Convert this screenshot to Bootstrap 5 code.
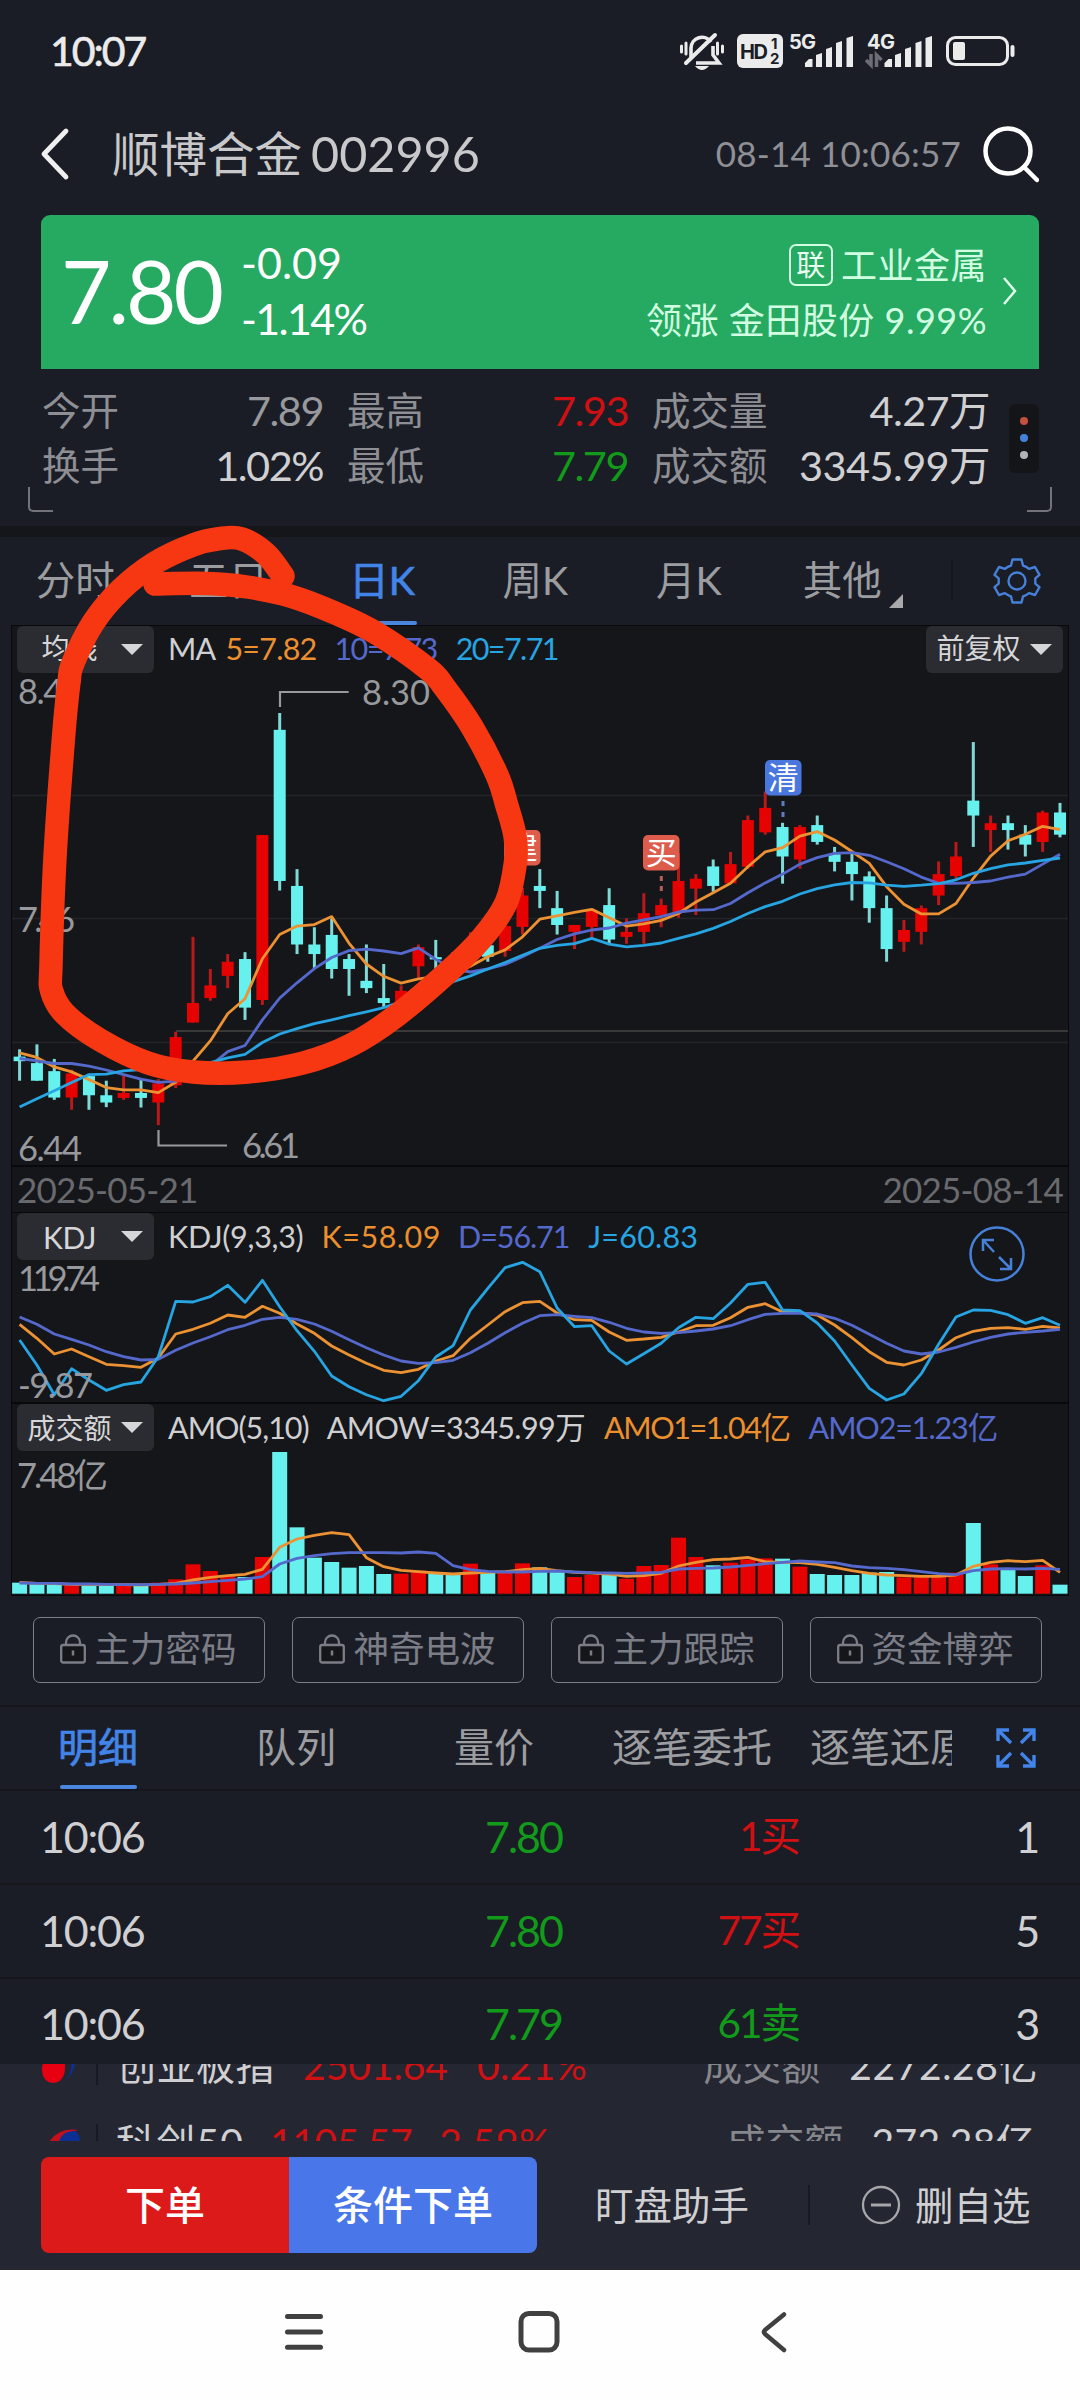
<!DOCTYPE html>
<html lang="zh-CN">
<head>
<meta charset="utf-8">
<meta name="viewport" content="width=1080">
<title>顺博合金 002996</title>
<link rel="stylesheet" href="https://cdn.jsdelivr.net/npm/bootstrap@5.3.0/dist/css/bootstrap.min.css">
<style>
html,body{width:1080px;height:2400px;overflow:hidden}
body{margin:0;background:#1b1d26;color:#d0d0d2;font-family:Lato,"Noto Sans CJK SC",sans-serif;font-size:38px;line-height:1;font-weight:400}
svg{display:block;flex:none}
span{white-space:nowrap}
.screen{width:1080px;height:2400px}
.statusbar{height:100px;padding:1px 54px 0 50px;color:#ebebeb}
.clock{font-size:41px;letter-spacing:-2px;-webkit-text-stroke:.6px #ebebeb}
.titlebar{height:115px;padding:0 41px 8px 40px}
.stockname{font-size:47.5px;color:#c9c9cb;margin-left:42px}
.stockcode{font-size:48.5px;color:#c9c9cb;margin-left:9px}
.stamp{font-size:35px;color:#8f9095;letter-spacing:.2px}
.quote{height:154px;margin:0 41px;background:#26a961;border-radius:9px 9px 0 0;padding:0 21px 3px 20px;color:#fff}
.bigprice{font-size:87px;letter-spacing:-3px;width:180px;height:87px}
.delta{font-size:43px;gap:13px}
.industry{font-size:36px;letter-spacing:.5px;color:#d2ffe2;gap:16px;margin-right:15px}
.tagbox{width:44px;height:42px;border:2px solid #d2ffe2;border-radius:7px;font-size:29px;color:#e9fff0}
.stats{height:157px;padding:14px 41px 0 42px}
.kv{height:55px;color:#d0d0d2;font-size:41.5px;letter-spacing:-.6px}
.kv.narrow{letter-spacing:-1.5px}
.kv>span:first-child{font-size:38.5px;color:#8e8f94;letter-spacing:0}
.dots{width:30px;height:69px;border-radius:6px;background:#141519;gap:8.6px;margin-left:18px;margin-top:20.5px}
.dots i{width:8px;height:8px;border-radius:50%}
.corner{width:25px;height:25px;border:2.5px solid #73747a;border-top:0}
.band{height:11px;background:#15161a}
.periods{height:88px;font-size:39.5px;color:#9c9da0}
.periods .per{width:153.4px;height:88px;padding-bottom:2px;padding-right:3px}
.on{color:#4284e8;-webkit-text-stroke:.7px #4284e8}
.uline{height:4.5px;border-radius:2px;background:#4a85e0}
.plot{margin:0 11px;background:#15161a;border:1px solid #08090c;width:1058px}
.tool{height:47px;padding-left:5px;font-size:30.5px}
.tool.first{height:48px}
.tool.first span{margin-bottom:3px}
.pick{width:137px;height:47px;background:#2b2c31;border-radius:6px;color:#d6d6d8;font-size:28px;padding-right:11px}
.pick .nm{width:89px;text-align:center}
.tri{width:0;height:0;border:11px solid transparent;border-top:11px solid #d6d6d8;border-bottom:0}
.cO{color:#ec8f2e}.cP{color:#5569cc}.cB{color:#26a5e2}
.up{color:#d01012!important}.dn{color:#129a1b!important}
.datesrow{height:48px;border-top:2px solid #08090c;border-bottom:1px solid #08090c;font-size:35px;letter-spacing:-.8px;color:#696a6d;padding:0 5px}
.locks{height:109px;padding:21px 38px 0 33px}
.lockbtn{width:232px;height:66px;border:1.5px solid #7b7d87;border-radius:7px;color:#7b7d87;font-size:35.5px;padding:0 1px 2px 0;gap:8px;background:none}
.dtabs{height:84px;border-top:2px solid #15161c;font-size:40px;color:#9c9da0}
.dtab{width:198px;height:82px;flex:none;padding:0 2px 2px 0}
.tick{height:94px;border-top:2px solid #15161c;font-size:43px;padding:0 41px 2px 40px}
.tick span{letter-spacing:-1.2px}
.tick .up,.tick .dn{letter-spacing:-2px}
.tick .side{font-size:40.5px}
.indices{height:77px;background:#242632;overflow:hidden;font-size:39px}
.idx{height:77px;padding:0 42px 0 41px}
.actions{height:129px;background:#242632;padding:16px 41px 0}
.actbtn{width:248px;height:96px;border:0;color:#fff;font-size:40px;font-weight:500;padding:0}
.navkeys{height:130px;background:#fefefe}
.ink{left:0;top:0;pointer-events:none}
</style>
</head>
<body>
<div class="screen position-relative d-flex flex-column">

<header class="statusbar d-flex align-items-center justify-content-between">
  <span class="clock">10:07</span>
  <svg width="350" height="50" viewBox="676 26 350 50" fill="none" stroke="#ebebeb">
    <path d="M691 57V48a11 11 0 0 1 20-6M713 46v9l6 8H696" stroke-width="3.6"/>
    <path d="M686 63 715 35" stroke-width="4" stroke-linecap="round"/>
    <path d="M695 66h14q-7 8-14 0z" fill="#ebebeb" stroke="none"/>
    <path d="M681.500 46v6M686 43v11M717.500 43v11M722.500 46v6" stroke-width="3" stroke-linecap="round"/>
    <rect x="737" y="34" width="46" height="34" rx="6" fill="#ebebeb" stroke="none"/>
    <g fill="#1b1d26" stroke="none" font-family="Inter,sans-serif" font-weight="700"><text x="740" y="58.500" font-size="20" textLength="28">HD</text><text x="771" y="49" font-size="15">1</text><text x="770" y="64" font-size="15">2</text></g>
    <g fill="#ebebeb" stroke="none" font-family="Inter,sans-serif" font-weight="700" font-size="20"><text x="789" y="48.500" textLength="27">5G</text><text x="867" y="48.500" textLength="28">4G</text></g>
    <g fill="#ebebeb" stroke="none">
      <path d="M805 67v-4l4-4h3.500v8zM816 67V55l6-2v14zM826 67V49l6-2v20zM836 67V43l6-2v26zM846.500 67V38l6.500-2v31z"/>
      <path d="M884.500 67v-4l4-4h3.500v8zM895 67V55l6-2v14zM905 67V49l6-2v20zM915.500 67V43l6-2v26zM925.500 67V38l6.500-2v31z"/>
    </g>
    <path d="M871 54v11l-5-5M876.500 67V55l5 5" stroke="#6c6d74" stroke-width="3.500"/>
    <rect x="947.500" y="37.500" width="60" height="27" rx="8" stroke-width="3"/>
    <rect x="953" y="42" width="12" height="18" rx="2" fill="#ebebeb" stroke="none"/>
    <path d="M1012.500 47v8" stroke-width="4" stroke-linecap="round"/>
  </svg>
</header>

<div class="titlebar d-flex align-items-center">
  <svg width="30" height="54" viewBox="0 0 30 54"><path d="M26 4 4 27 26 50" fill="none" stroke="#efefef" stroke-width="4.800" stroke-linecap="round" stroke-linejoin="round"/></svg>
  <span class="stockname">顺博合金</span><span class="stockcode">002996</span>
  <span class="stamp ms-auto" style="margin-right:22px">08-14 10:06:57</span>
  <svg width="56" height="58" viewBox="0 0 56 58" fill="none" stroke="#fff" stroke-width="4.500" stroke-linecap="round"><circle cx="25" cy="26" r="22.500"/><path d="M41 42 54 55"/></svg>
</div>

<section class="quote d-flex align-items-center">
  <span class="bigprice">7.80</span>
  <div class="delta d-flex flex-column"><span>-0.09</span><span style="letter-spacing:-1.7px">-1.14%</span></div>
  <div class="industry d-flex flex-column align-items-end ms-auto">
    <div class="d-flex align-items-center gap-2"><span class="tagbox d-flex align-items-center justify-content-center">联</span><span>工业金属</span></div>
    <span>领涨 金田股份 9.99%</span>
  </div>
  <svg width="16" height="30" viewBox="0 0 16 30"><path d="M2 2 13 15 2 28" fill="none" stroke="#e0ffea" stroke-width="2.500"/></svg>
</section>

<section class="stats position-relative d-flex align-items-start">
  <div class="flex-fill d-flex" style="gap:24px">
    <div style="width:281px">
      <div class="kv narrow d-flex align-items-center justify-content-between"><span>今开</span><span style="color:#98999c">7.89</span></div>
      <div class="kv narrow d-flex align-items-center justify-content-between"><span>换手</span><span>1.02%</span></div>
    </div>
    <div style="width:281px">
      <div class="kv narrow d-flex align-items-center justify-content-between"><span>最高</span><span class="up">7.93</span></div>
      <div class="kv narrow d-flex align-items-center justify-content-between"><span>最低</span><span class="dn">7.79</span></div>
    </div>
    <div style="width:338px">
      <div class="kv d-flex align-items-center justify-content-between"><span>成交量</span><span>4.27万</span></div>
      <div class="kv d-flex align-items-center justify-content-between"><span>成交额</span><span>3345.99万</span></div>
    </div>
  </div>
  <div class="dots d-flex flex-column align-items-center justify-content-center"><i style="background:#c4503f"></i><i style="background:#4482dc"></i><i style="background:#b4b4b8"></i></div>
  <div class="corner position-absolute border-end-0" style="left:28px;top:118px;border-bottom-left-radius:5px"></div>
  <div class="corner position-absolute border-start-0" style="right:28px;top:118px;border-bottom-right-radius:5px"></div>
</section>

<div class="band"></div>

<nav class="periods d-flex align-items-center">
  <span class="per d-flex align-items-center justify-content-center">分时</span>
  <span class="per d-flex align-items-center justify-content-center">五日</span>
  <span class="per on position-relative d-flex align-items-center justify-content-center">日K<i class="uline position-absolute bottom-0" style="width:70px"></i></span>
  <span class="per d-flex align-items-center justify-content-center">周K</span>
  <span class="per d-flex align-items-center justify-content-center">月K</span>
  <span class="per position-relative d-flex align-items-center justify-content-center">其他<svg class="position-absolute" style="right:17px;bottom:17px" width="14" height="14"><path d="M14 0V14H0z" fill="#a9a9ab"/></svg></span>
  <svg class="ms-auto" width="100" height="60" viewBox="950 551 100 60" fill="none" stroke="#4680d8" stroke-width="2.400" stroke-linejoin="round">
    <path d="M952 560v41" stroke="#13141a" stroke-width="1.500"/>
    <circle cx="1017" cy="581" r="8.500"/>
    <path d="M1012.500 559.500h9l1.500 6q3.500 1.200 6 3.300l6-1.800 4.500 7.800-4.200 3.600v5.200l4.200 3.600-4.500 7.800-6-1.800q-2.500 2.100-6 3.300l-1.500 6h-9l-1.500-6q-3.500-1.200-6-3.300l-6 1.800-4.500-7.800 4.200-3.600v-5.200l-4.200-3.600 4.500-7.800 6 1.800q2.500-2.100 6-3.300z"/>
  </svg>
  <span style="width:30px"></span>
</nav>

<section class="plot">
  <div class="tool first d-flex align-items-center">
    <div class="pick d-flex align-items-center justify-content-between ps-2 align-self-start"><span class="nm">均线</span><i class="tri"></i></div>
    <span style="margin-left:14px;letter-spacing:-.8px">MA</span><span class="cO" style="margin-left:10px;letter-spacing:-.75px">5=7.82</span><span class="cP" style="margin-left:18px;letter-spacing:-1.6px">10=7.73</span><span class="cB" style="margin-left:19px;letter-spacing:-1.6px">20=7.71</span>
    <div class="pick d-flex align-items-center justify-content-between ps-2 ms-auto align-self-start" style="margin-right:5px"><span class="nm">前复权</span><i class="tri"></i></div>
  </div>
  <svg id="kline" width="1056" height="491" viewBox="12 674 1056 491"></svg>
  <div class="datesrow d-flex align-items-center justify-content-between"><span>2025-05-21</span><span>2025-08-14</span></div>
  <div class="position-relative">
    <div class="tool d-flex align-items-center">
      <div class="pick d-flex align-items-center justify-content-between ps-2"><span class="nm" style="font-size:30px;letter-spacing:-.5px">KDJ</span><i class="tri"></i></div>
      <span style="margin-left:14px;letter-spacing:-.3px">KDJ(9,3,3)</span><span class="cO" style="margin-left:18px;letter-spacing:.55px">K=58.09</span><span class="cP" style="margin-left:17px;letter-spacing:-1.1px">D=56.71</span><span class="cB" style="margin-left:19px;letter-spacing:.2px">J=60.83</span>
    </div>
    <svg id="kdj" width="1056" height="144" viewBox="12 1260 1056 144"></svg>
    <svg class="position-absolute" style="left:956px;top:12px" width="58" height="58" viewBox="0 0 58 58" fill="none" stroke="#4680d8" stroke-width="2.500"><circle cx="29" cy="29" r="26.500"/><path d="M26 27 15 15M15 26V15h11M31 32l12 12M43 33v11H32"/></svg>
  </div>
  <div class="tool d-flex align-items-center" style="box-shadow:0 -2px #08090c">
    <div class="pick d-flex align-items-center justify-content-between ps-2"><span class="nm">成交额</span><i class="tri"></i></div>
    <span style="margin-left:14px;letter-spacing:-1px">AMO(5,10)</span><span style="margin-left:18px;letter-spacing:-.6px">AMOW=3345.99万</span><span class="cO" style="margin-left:19px;letter-spacing:-1.4px">AMO1=1.04亿</span><span class="cP" style="margin-left:19px;letter-spacing:-1.1px">AMO2=1.23亿</span>
  </div>
  <svg id="amo" width="1056" height="144" viewBox="12 1451 1056 144"></svg>
</section>

<section class="locks d-flex justify-content-between align-items-start">
  <button class="lockbtn btn d-flex align-items-center justify-content-center"><svg class="lk" width="26" height="30"></svg><span>主力密码</span></button>
  <button class="lockbtn btn d-flex align-items-center justify-content-center"><svg class="lk" width="26" height="30"></svg><span>神奇电波</span></button>
  <button class="lockbtn btn d-flex align-items-center justify-content-center"><svg class="lk" width="26" height="30"></svg><span>主力跟踪</span></button>
  <button class="lockbtn btn d-flex align-items-center justify-content-center"><svg class="lk" width="26" height="30"></svg><span>资金博弈</span></button>
</section>

<nav class="dtabs d-flex align-items-center">
  <div class="d-flex overflow-hidden" style="width:952px">
    <span class="dtab on position-relative d-flex align-items-center justify-content-center">明细<i class="uline position-absolute bottom-0" style="width:77px"></i></span>
    <span class="dtab d-flex align-items-center justify-content-center">队列</span>
    <span class="dtab d-flex align-items-center justify-content-center">量价</span>
    <span class="dtab d-flex align-items-center justify-content-center">逐笔委托</span>
    <span class="dtab d-flex align-items-center justify-content-center">逐笔还原</span>
  </div>
  <svg style="margin-left:44px" width="40" height="40" viewBox="0 0 40 40" fill="none" stroke="#4284e8" stroke-width="3.400"><path d="M2 13V2h11M2 2l13 13M27 2h11v11M38 2 25 15M2 27v11h11M2 38l13-13M38 27v11H27M38 38 25 25"/></svg>
</nav>

<div class="tick d-flex align-items-center"><span style="width:200px">10:06</span><span class="dn text-end" style="width:322px">7.80</span><span class="side up text-end" style="width:237px">1买</span><span class="ms-auto">1</span></div>
<div class="tick d-flex align-items-center"><span style="width:200px">10:06</span><span class="dn text-end" style="width:322px">7.80</span><span class="side up text-end" style="width:237px">77买</span><span class="ms-auto">5</span></div>
<div class="tick d-flex align-items-center" style="height:87px;padding-bottom:0"><span style="width:200px;margin-top:4px">10:06</span><span class="dn text-end" style="width:322px;margin-top:4px">7.79</span><span class="side dn text-end" style="width:237px;margin-top:4px">61卖</span><span class="ms-auto" style="margin-top:4px">3</span></div>

<section class="indices">
  <div class="idx d-flex align-items-center" style="margin-top:-37px">
    <svg width="39" height="39" viewBox="0 0 39 39"><path d="M24 4q20 12-1 33Q37 20 24 4z" fill="#0b2f92"/><path d="M1 25Q0 14 10 11q6 2 14 7 1 18-12 19Q2 36 1 25z" fill="#e60012"/></svg>
    <i style="width:2px;height:38px;background:#181a22;margin-left:16px"></i>
    <span style="margin-left:19px;letter-spacing:.5px">创业板指</span><span class="up" style="margin-left:28px">2501.64</span><span class="up" style="margin-left:29px;letter-spacing:.4px">0.21%</span>
    <span class="ms-auto" style="color:#86878c">成交额</span><span style="margin-left:29px;letter-spacing:.6px">2272.28亿</span>
  </div>
  <div class="idx d-flex align-items-center">
    <svg width="39" height="39" viewBox="0 0 39 39"><path d="M1 38Q8 2 38 7 18 8 13 38z" fill="#c4101c"/><path d="M17 22Q20 7 34 8q9 6 2 22H14z" fill="#0b2f92"/></svg>
    <i style="width:2px;height:38px;background:#181a22;margin-left:16px"></i>
    <span style="margin-left:18px;letter-spacing:1.2px">科创50</span><span class="up" style="margin-left:26px;letter-spacing:-.4px">1105.57</span><span class="up" style="margin-left:27px;letter-spacing:.7px">2.59%</span>
    <span class="ms-auto" style="color:#86878c">成交额</span><span style="margin-left:28px;letter-spacing:.3px;margin-right:3px">272.28亿</span>
  </div>
</section>

<section class="actions d-flex align-items-start">
  <button class="actbtn btn" style="background:#dc1a1a;border-radius:8px 0 0 8px">下单</button>
  <button class="actbtn btn" style="background:#4977e9;border-radius:0 8px 8px 0">条件下单</button>
  <div class="d-flex align-items-center flex-fill" style="height:96px;font-size:38.500px">
    <span style="margin-left:58px">盯盘助手</span>
    <i style="width:2px;height:40px;background:#181a22;margin-left:59px"></i>
    <svg style="margin-left:51px" width="40" height="40" viewBox="0 0 40 40" fill="none" stroke="#a6a7aa" stroke-width="2.300"><circle cx="20" cy="20" r="18"/><path d="M10 20h20" stroke-width="3"/></svg>
    <span style="margin-left:14px">删自选</span>
  </div>
</section>

<footer class="navkeys">
  <svg width="1080" height="130" viewBox="0 2270 1080 130" fill="none" stroke="#404040" stroke-width="5" stroke-linecap="round" stroke-linejoin="round">
    <path d="M287.500 2316.500h33M287.500 2332h33M287.500 2347.300h33"/>
    <rect x="521" y="2313.500" width="36" height="36.500" rx="8"/>
    <path d="M784 2314.500 765 2330q-2 2 0 4l19 16" stroke-width="4.500"/>
  </svg>
</footer>

<svg class="ink position-absolute" width="1080" height="1200" viewBox="0 0 1080 1200"><path id="pen" fill="none" stroke="#f73711" stroke-width="23.500" stroke-linecap="round" stroke-linejoin="round"/></svg>
</div>

<script src="https://cdn.jsdelivr.net/npm/bootstrap@5.3.0/dist/js/bootstrap.bundle.min.js"></script>
<script>
const CYAN='#66f0ee', RED='#e60200';
const X=i=>19.6+17.34*i;
const line=(vals,Y,c)=>`<polyline fill="none" stroke="${c}" stroke-width="2.800" stroke-linejoin="round" points="${vals.map((v,i)=>X(i).toFixed(1)+','+Y(v).toFixed(1)).join(' ')}"/>`;
const label=(x,y,t,w,c='#98999c')=>`<text x="${x}" y="${y}" font-size="34.5" fill="${c}" textLength="${w}">${t}</text>`;
const ORANGE='#ec9232', PURPLE='#5569cc', BLUE='#26a5e2';

/* candles: colour, body top, body bottom, high, low */
const YK=v=>620+v/2.6133;
const candles=`c1141,1153,1122,1204 c1158,1204,1109,1204 c1179,1248,1147,1254 r1185,1248,1175,1280 c1192,1242,1188,1280 c1242,1261,1204,1273 r1236,1249,1192,1254 c1236,1249,1198,1274 r1211,1261,1200,1320 r1090,1216,1076,1223
r1001,1052,828,1052 r955,988,912,995 r893,930,873,962 c886,1013,868,1045 r562,993,562,1006 c287,682,243,707 c695,848,651,873 c848,873,803,910 c823,912,780,937 c886,912,873,982
c943,962,848,975 c988,1001,899,1013 r969,1025,955,1040 r855,905,848,935 c881,887,836,912 c895,910,868,930 r841,890,816,905 c850,880,830,893 r800,865,790,880 r720,802,700,822
c695,708,651,753 c753,797,708,822 r797,815,797,860 r760,802,757,830 c745,835,701,845 r815,828,780,846 r766,815,714,846 r745,772,728,803 r682,765,610,778 r676,702,664,771
c644,695,626,710 r638,688,606,688 r523,645,511,650 r491,555,448,561 c541,618,530,689 r541,626,536,650 c536,580,511,587 c612,632,593,657 c632,664,610,733 c670,753,657,791
c753,860,720,893 r810,841,784,867 r753,815,746,848 r664,720,631,745 r618,669,580,680 c472,511,319,593 r531,549,511,606 c531,549,511,600 c561,587,536,618 r503,580,498,606 c503,561,478,568`.split(/\s+/);
const ma5=[1131,1143,1168,1181,1201,1222,1228,1228,1235,1208,1153,1100,1029,990,885,822,800,796,775,845,899,931,949,938,932,925,905,880,862,828,782,773,764,756,778,800,794,785,767,737,713,688,645,606,595,565,553,575,605,636,697,743,768,768,741,675,617,577,560,539,548];
const ma10=[1146,1152,1159,1159,1166,1176,1188,1200,1208,1205,1185,1165,1128,1112,1045,988,948,911,882,864,860,865,872,857,887,912,920,912,900,880,858,835,820,810,805,792,784,775,763,758,757,741,713,687,664,638,621,610,608,615,632,650,672,688,688,686,682,672,664,638,612];
const ma20=[1273,1251,1230,1209,1188,1187,1178,1175,1175,1172,1170,1157,1144,1135,1104,1082,1068,1055,1045,1034,1024,1013,998,980,960,945,930,912,895,876,858,850,846,832,847,854,850,844,832,820,806,788,767,749,735,716,702,692,686,687,693,696,693,689,679,662,650,640,635,628,622];
let k='';
for(const y of [795.5,918.5,1042.5]) k+=`<path d="M12 ${y}H1068" stroke="#22242a" stroke-width="1.3"/>`;
k+='<path d="M176 1031H1068" stroke="#39393a" stroke-width="2.2"/>';
candles.forEach((s,i)=>{
  const up=s[0]==='r',[a,b,h,l]=s.slice(1).split(',').map(v=>YK(+v));
  k+=`<rect x="${X(i)-1.5}" y="${h}" width="3" height="${l-h}" fill="${up?'#b81a1c':'#7fd9d6'}"/><rect x="${X(i)-6}" y="${a}" width="12" height="${b-a}" fill="${up?RED:CYAN}"/>`;
});
k+=line(ma5,YK,ORANGE)+line(ma10,YK,PURPLE)+line(ma20,YK,BLUE);
k+=label(18,704,'8.47',64)+label(18,932,'7.46',57)+label(18,1161,'6.44',64)+label(362,705,'8.30',68)+label(242,1158,'6.61',58);
k+='<path d="M280 707V692H348.600M158.500 1130V1145.500H227" fill="none" stroke="#98999c" stroke-width="2.2"/>';
for(const [x,y,t,c] of [[504,830,'建','#dd5c4c'],[643,835,'买','#dd5c4c'],[765,760,'清','#4977dd']])
  k+=`<rect x="${x}" y="${y}" width="36.500" height="35.500" rx="5" fill="${c}"/><text x="${x+18.2}" y="${y+29}" font-size="31" fill="#fff" text-anchor="middle">${t}</text>`;
k+='<path d="M661.300 876v18" stroke="#b4605a" stroke-width="3" stroke-dasharray="5 5"/><path d="M783 801v18" stroke="#5f7bc4" stroke-width="3" stroke-dasharray="5 6"/>';
document.getElementById('kline').innerHTML=k;

const YD=v=>1160+v/3;
const J=[540,615,704,626,660,691,674,666,590,424,426,410,376,427,361,440,512,574,648,680,704,722,709,662,591,557,450,385,323,307,335,444,500,497,573,612,581,550,503,472,476,429,373,367,450,452,489,543,615,685,720,702,641,553,471,450,451,464,490,473,496];
const K=[493,535,582,567,590,613,617,622,594,522,508,490,465,472,439,460,492,520,558,585,610,631,638,628,603,587,535,495,455,428,424,459,479,481,516,541,537,532,516,497,496,473,442,431,456,458,465,495,533,575,607,615,600,570,533,514,505,503,508,499,504];
const D=[471,493,522,538,555,575,590,600,598,571,549,530,509,496,478,472,478,492,514,539,563,585,603,610,608,601,578,550,518,490,467,464,469,473,487,505,516,520,518,513,507,497,479,463,460,460,462,475,496,523,550,573,582,576,562,546,532,522,517,513,508];
document.getElementById('kdj').innerHTML=line(K,YD,ORANGE)+line(D,YD,PURPLE)+line(J,YD,BLUE)+label(18,1291,'119.74',82)+label(18,1398,'-9.87',75);

const vol='c1268 c1268 c1270 r1270 c1272 c1274 r1275 c1276 r1268 r1258 r1213 r1233 r1247 c1251 r1191 c876 c1102 c1193 c1206 c1223 c1218 c1242 r1241 r1232 c1238 c1243 r1211 c1234 r1236 r1210 c1222 c1236 r1251 r1245 c1240 r1256 r1218 r1215 r1133 r1191 c1216 r1208 r1198 r1195 c1196 r1220 c1242 c1245 c1245 c1238 c1236 r1252 r1249 r1249 r1238 c1089 r1213 c1230 c1248 r1216 c1274'.split(' ');
const a1=[1267,1270,1271,1273,1274,1273,1274,1275,1273,1270,1260,1252,1247,1243,1228,1162,1137,1126,1118,1124,1193,1220,1231,1235,1239,1242,1239,1237,1235,1229,1225,1232,1237,1239,1242,1249,1247,1240,1218,1207,1199,1197,1192,1205,1207,1208,1213,1222,1232,1240,1245,1247,1249,1249,1245,1219,1207,1202,1205,1201,1237];
const a2=[1269,1270,1270,1272,1272,1273,1274,1274,1273,1272,1269,1265,1261,1257,1250,1212,1195,1187,1181,1178,1178,1178,1179,1176,1180,1217,1229,1234,1236,1236,1234,1233,1236,1238,1239,1240,1239,1237,1227,1225,1224,1221,1216,1211,1207,1203,1206,1208,1218,1223,1225,1229,1235,1241,1244,1232,1227,1226,1227,1225,1228];
document.getElementById('amo').innerHTML=vol.map((s,i)=>{const y=YD(+s.slice(1));return `<rect x="${X(i)-7.5}" y="${y}" width="15" height="${1593.7-y}" fill="${s[0]==='r'?RED:CYAN}"/>`}).join('')+line(a1,YD,ORANGE)+line(a2,YD,PURPLE)+label(17,1488,'7.48亿',91);

document.querySelectorAll('.lk').forEach(s=>{s.setAttribute('viewBox','0 0 26 30');s.innerHTML='<path d="M6 12V8.500a7 7 0 0 1 14 0V12" fill="none" stroke="#7b7d87" stroke-width="2.300"/><rect x="1.200" y="11" width="23.600" height="17.500" rx="2" fill="#15161a" stroke="#7b7d87" stroke-width="2.300"/><path d="M13 16.500v5" stroke="#7b7d87" stroke-width="2.500"/>'});

/* hand-drawn loop, smoothed through its sample points */
const P=[[155,584],[207,583.5],[247,587],[290,596],[335,613],[376,633],[428,669],[445,688],[472,727],[497,775],[507,806],[515,836],[515.5,862],[506,903],[482,938],[448,972],[396,1016],[351,1045],[303,1063],[248,1072],[193,1072],[148,1063],[100,1040],[65,1014],[51.7,991],[51,964],[55,857],[63.7,735],[69,682],[73,663],[93,623],[120.5,590],[155,563],[193,545],[220,538.5],[242,539],[266,554],[283,576]];
let d=`M${P[0]}`;
for(let i=0;i<P.length-1;i++){const a=P[i-1]||P[i],b=P[i],c=P[i+1],e=P[i+2]||c;
  d+=`C${b[0]+(c[0]-a[0])/6},${b[1]+(c[1]-a[1])/6} ${c[0]-(e[0]-b[0])/6},${c[1]-(e[1]-b[1])/6} ${c}`;}
document.getElementById('pen').setAttribute('d',d);
</script>
</body>
</html>
